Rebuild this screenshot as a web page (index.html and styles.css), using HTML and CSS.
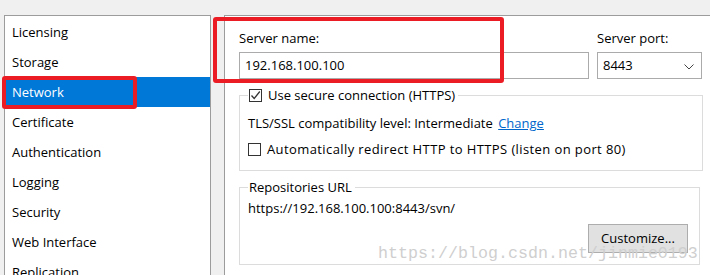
FILE: index.html
```html
<!DOCTYPE html>
<html>
<head>
<meta charset="utf-8">
<link rel="stylesheet" href="styles.css">
</head>
<body>
<div class="window">
  <ul class="nav">
    <li class="nav-item">Licensing</li>
    <li class="nav-item">Storage</li>
    <li class="nav-item selected">Network</li>
    <li class="nav-item">Certificate</li>
    <li class="nav-item">Authentication</li>
    <li class="nav-item">Logging</li>
    <li class="nav-item">Security</li>
    <li class="nav-item">Web Interface</li>
    <li class="nav-item">Replication</li>
  </ul>
  <div class="panel">
    <div class="server-row">
      <div class="field name-field">
        <div class="label">Server name:</div>
        <div class="textbox">192.168.100.100</div>
      </div>
      <div class="field port-field">
        <div class="label">Server port:</div>
        <div class="combo">
          <span>8443</span>
          <svg class="chev" width="10" height="6" viewBox="0 0 10 6"><path d="M0.5 0.5 L5 5 L9.5 0.5" fill="none" stroke="#444" stroke-width="1"/></svg>
        </div>
      </div>
    </div>
    <div class="group group-https">
      <div class="group-title">
        <span class="check checked"><svg width="13" height="13" viewBox="0 0 13 13"><path d="M2.5 6.5 L5.2 9.5 L10.8 2.5" fill="none" stroke="#333" stroke-width="1.3"/></svg></span>
        <span>Use secure connection (HTTPS)</span>
      </div>
      <div class="tls-row">TLS/SSL compatibility level: Intermediate <a class="link">Change</a></div>
      <div class="check-row">
        <span class="check"></span>
        <span class="wide">Automatically redirect HTTP to HTTPS (listen on port 80)</span>
      </div>
    </div>
    <div class="group group-url">
      <div class="group-title plain">Repositories URL</div>
      <div class="url">https://192.168.100.100:8443/svn/</div>
      <div class="btn-row"><div class="button">Customize...</div></div>
    </div>
  </div>
</div>
<div class="mark mark-nav"></div>
<div class="mark mark-name"></div>
<div class="watermark">https://blog.csdn.net/jinmie0193</div>
</body>
</html>
```
FILE: styles.css
```css
html, body {
  margin: 0;
  padding: 0;
}
body {
  width: 710px;
  height: 275px;
  overflow: hidden;
  background: #f0f0f0;
  font-family: "Open Sans", "Liberation Sans", sans-serif;
  font-size: 13px;
  color: #000;
  position: relative;
}
.window {
  display: flex;
  padding: 15px 0 0 4px;
  height: 300px;
  box-sizing: border-box;
}
.nav {
  list-style: none;
  margin: 0;
  padding: 1px 0 0 0;
  width: 207px;
  box-sizing: border-box;
  border: 1px solid #9c9c9c;
  background: #fff;
  flex: none;
}
.nav-item {
  height: 30px;
  line-height: 30px;
  padding-left: 7px;
}
.nav-item.selected {
  background: #0078d7;
  color: #fff;
}
.panel {
  flex: 1;
  margin-left: 13px;
  border-left: 1px solid #9c9c9c;
  border-top: 1px solid #9c9c9c;
  background: #fff;
  padding: 13px 7px 0 14px;
}
.server-row {
  display: flex;
  gap: 8px;
}
.label {
  line-height: 18px;
  height: 18px;
  margin-bottom: 5px;
}
.name-field { width: 350px; }
.port-field { width: 105px; }
.textbox, .combo {
  height: 27px;
  box-sizing: border-box;
  border: 1px solid #ababab;
  line-height: 25px;
  padding-left: 5px;
}
.combo {
  display: flex;
  justify-content: space-between;
  align-items: center;
  padding-right: 7px;
}
.chev { display: block; margin-top: 3px; }
.group {
  border: 1px solid #dcdcdc;
  margin-top: 16px;
  padding: 0 0 12px 8px;
}
.group-url {
  margin-right: 3px;
  padding-bottom: 11px;
  padding-right: 11px;
}
.group-title {
  display: flex;
  width: max-content;
  align-items: center;
  gap: 6px;
  background: #fff;
  height: 18px;
  line-height: 18px;
  margin: -10px 0 0 0;
  padding: 0 3px 0 1px;
}
.check {
  width: 13px;
  height: 13px;
  box-sizing: border-box;
  border: 1px solid #333;
  background: #fff;
  display: block;
  flex: none;
  position: relative;
}
.check svg {
  position: absolute;
  left: -1px;
  top: -1px;
}
.tls-row {
  line-height: 18px;
  height: 18px;
  margin-top: 10px;
}
.link {
  color: #0066cc;
  text-decoration: underline;
  margin-left: 2px;
}
.check-row {
  display: flex;
  align-items: center;
  gap: 6px;
  height: 18px;
  line-height: 18px;
  margin-top: 8px;
}
.wide {
  letter-spacing: 0.4px;
}
.url {
  line-height: 18px;
  height: 18px;
  margin-top: 3px;
}
.btn-row {
  display: flex;
  justify-content: flex-end;
  margin-top: 7px;
}
.button {
  width: 100px;
  height: 29px;
  box-sizing: border-box;
  background: #e1e1e1;
  border: 1px solid #adadad;
  text-align: center;
  line-height: 27px;
}
.mark {
  position: absolute;
  border: 4px solid #ec1c24;
  border-radius: 3px;
  box-sizing: border-box;
}
.mark-nav {
  left: 2px;
  top: 76px;
  width: 135px;
  height: 33px;
}
.mark-name {
  left: 213px;
  top: 17px;
  width: 291px;
  height: 66px;
}
.watermark {
  position: absolute;
  left: 378px;
  top: 244px;
  font-family: "Liberation Mono", "DejaVu Sans Mono", monospace;
  font-size: 16.67px;
  color: #cfcfcf;
  line-height: 20px;
  pointer-events: none;
}
```
